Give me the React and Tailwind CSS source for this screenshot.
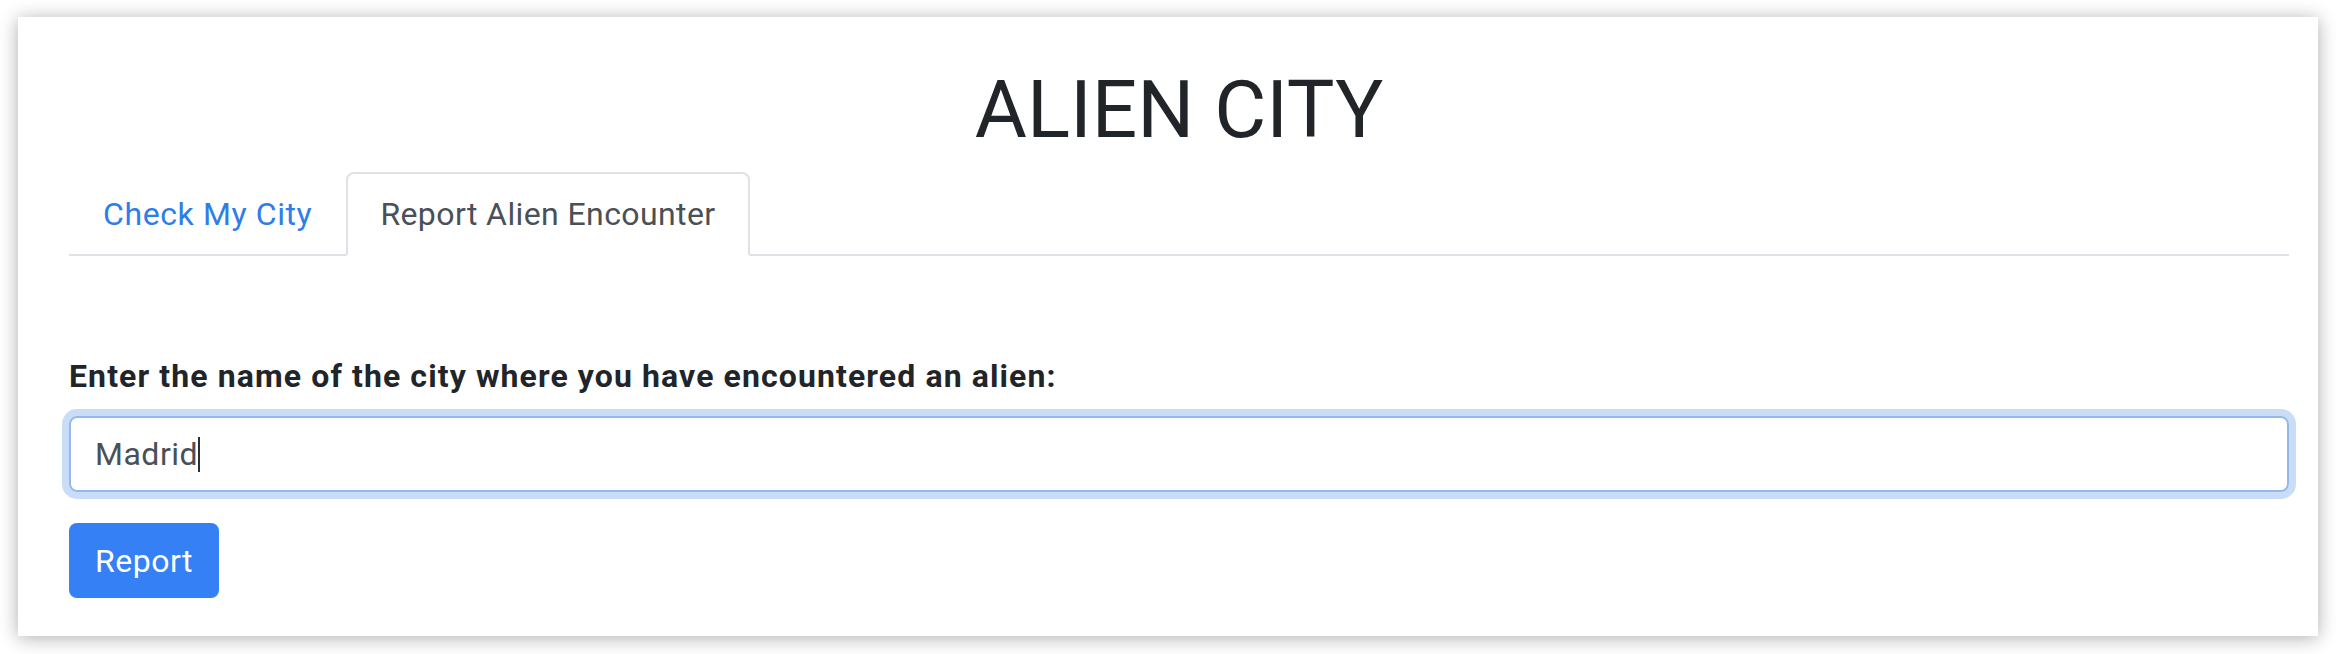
import React, { useState } from "react";

export default function App() {

    const [tab, setTab] = useState(1)
    const [city] = useState("Madrid")

    return (
        <div className="min-h-screen bg-white pt-[17px] px-[18px] font-['Roboto',sans-serif]">
            <div className="w-[2300px] bg-white shadow-[0_2px_18px_rgba(0,0,0,0.32)] pt-[45px] pb-[38px] pl-[51px] pr-[29px]">

                <h1 className="text-center text-[80px] leading-[96px] font-normal text-[#212529] mb-[14px]">ALIEN CITY</h1>

                {/* tabs */}
                <div className="flex border-b-2 border-[#dee2e6]">
                    <button
                        onClick={() => setTab(0)}
                        className={tab == 0
                            ? "px-[32px] py-[16px] -mb-[2px] text-[32px] leading-[48px] tracking-[0.6px] border-2 border-[#dee2e6] border-b-white bg-white rounded-t-[8px] text-[#495057]"
                            : "px-[32px] py-[16px] -mb-[2px] text-[32px] leading-[48px] tracking-[0.6px] border-2 border-transparent rounded-t-[8px] text-[#2f7de8]"}
                    >
                        Check My City
                    </button>
                    <button
                        onClick={() => setTab(1)}
                        className={tab == 1
                            ? "px-[32px] py-[16px] -mb-[2px] text-[32px] leading-[48px] tracking-[0.4px] border-2 border-[#dee2e6] border-b-white bg-white rounded-t-[8px] text-[#495057]"
                            : "px-[32px] py-[16px] -mb-[2px] text-[32px] leading-[48px] tracking-[0.4px] border-2 border-transparent rounded-t-[8px] text-[#2f7de8]"}
                    >
                        Report Alien Encounter
                    </button>
                </div>

                <div className="mt-[96px]">
                    <label className="block text-[32px] leading-[48px] font-bold tracking-[1.1px] text-[#212529] mb-[16px]">
                        Enter the name of the city where you have encountered an alien:
                    </label>

                    <div className="flex items-center h-[76px] px-[24px] border-2 border-[#94b8ec] rounded-[8px] shadow-[0_0_0_7px_#c9ddf8] text-[32px] leading-[48px] tracking-[0.5px] text-[#495057]">
                        {city}
                        <span className="inline-block w-[2px] h-[35px] bg-[#2b2f33]"></span>
                    </div>

                    <button className="mt-[31px] h-[75px] px-[26px] rounded-[8px] bg-[#3580f5] text-white text-[32px] leading-[48px] tracking-[0.5px]">
                        Report
                    </button>
                </div>

            </div>
        </div>
    )
}
